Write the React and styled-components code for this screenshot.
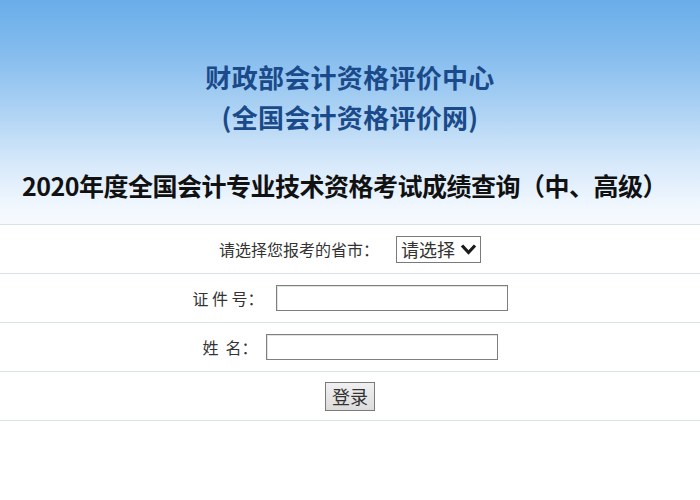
import React from "react";
import styled, { createGlobalStyle } from "styled-components";

const Global = createGlobalStyle`
  html, body { margin: 0; padding: 0; background: #ffffff; }
  body { font-family: "Noto Sans CJK SC", "Noto Sans", sans-serif; }
`;

const Page = styled.div`
  width: 700px;
  height: 500px;
  overflow: hidden;
  background: #ffffff;
`;

const Header = styled.header`
  height: 225px;
  box-sizing: border-box;
  padding-top: 57px;
  border-bottom: 1px solid #d8e3e6;
  background: linear-gradient(
    to bottom,
    #69ade9 0%,
    #86bdee 25%,
    #aed3f4 50%,
    #d5e8fa 72%,
    #f1f7fe 92%,
    #f6fafe 100%
  );
  display: flex;
  flex-direction: column;
  align-items: center;
`;

const OrgName = styled.div`
  font-size: 26px;
  line-height: 40px;
  font-weight: 700;
  color: #1a4a8a;
  text-align: center;
  letter-spacing: 0.3px;
`;

const PageTitle = styled.h1`
  margin: 28px 0 0 0;
  align-self: stretch;
  padding-left: 22px;
  font-size: 25px;
  line-height: 40px;
  font-weight: 700;
  letter-spacing: -0.5px;
  color: #111111;
  white-space: nowrap;
`;

const Form = styled.form`
  margin: 0;
  display: flex;
  flex-direction: column;
`;

const Row = styled.div`
  height: 48px;
  border-bottom: 1px solid #d8e3e6;
  display: flex;
  align-items: center;
  justify-content: center;
`;

const Label = styled.span`
  font-size: 16px;
  color: #333333;
  white-space: pre;
  margin-right: ${(p) => p.$gap}px;
`;

const SelectBox = styled.div`
  width: 85px;
  height: 27px;
  box-sizing: border-box;
  border: 1px solid #7a7a7a;
  background: #ffffff;
  display: flex;
  align-items: center;
  justify-content: space-between;
  padding: 0 3px 0 4px;
  font-size: 18px;
  color: #333333;
`;

const TextInput = styled.input`
  width: 232px;
  height: 26px;
  box-sizing: border-box;
  border: 1px solid #7f7f7f;
  box-shadow: inset 1px 1px 0 #e2e2e2;
  background: #ffffff;
  padding: 0 3px;
  font-size: 15px;
  outline: none;
`;

const Button = styled.button`
  width: 50px;
  height: 29px;
  box-sizing: border-box;
  border: 1px solid #7a7a7a;
  background: linear-gradient(to bottom, #f0f0f0, #dcdcdc);
  font-family: "Noto Sans CJK SC", sans-serif;
  font-size: 18px;
  line-height: 1;
  color: #333333;
  padding: 0;
`;

function Chevron() {
  return (
    <svg width="17" height="12" viewBox="0 0 17 12">
      <path d="M2 2.5 L8.5 9.5 L15 2.5" fill="none" stroke="#1a1a1a" strokeWidth="3.2" strokeLinejoin="miter" />
    </svg>
  );
}

export default function App() {
  return (
    <Page>
      <Global />
      <Header>
        <OrgName>财政部会计资格评价中心</OrgName>
        <OrgName>(全国会计资格评价网)</OrgName>
        <PageTitle>2020年度全国会计专业技术资格考试成绩查询（中、高级）</PageTitle>
      </Header>
      <Form onSubmit={(e) => e.preventDefault()}>
        <Row>
          <Label $gap={17}>请选择您报考的省市：</Label>
          <SelectBox>
            <span>请选择</span>
            <Chevron />
          </SelectBox>
        </Row>
        <Row>
          <Label $gap={12}>证 件 号：</Label>
          <TextInput type="text" />
        </Row>
        <Row>
          <Label $gap={8}>{"姓  名："}</Label>
          <TextInput type="text" />
        </Row>
        <Row>
          <Button type="submit">登录</Button>
        </Row>
      </Form>
    </Page>
  );
}
